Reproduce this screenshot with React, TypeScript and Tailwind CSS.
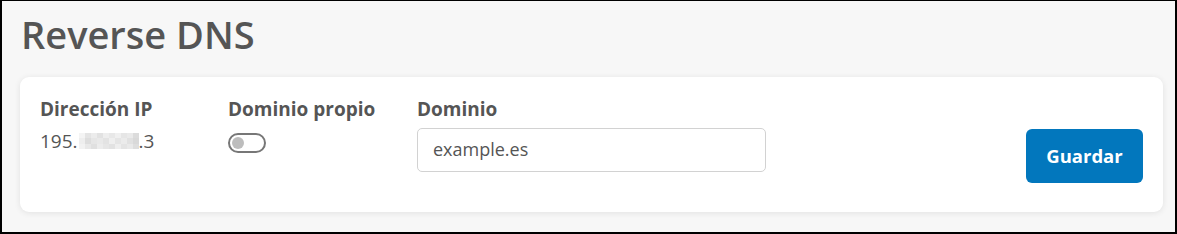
import React from "react";

const blur = [
  ["#f4f4f4", "#e4e4e4", "#ececec", "#e2e2e2", "#eeeeee", "#e8e8e8", "#f0f0f0", "#e6e6e6", "#eaeaea", "#dcdcdc"],
  ["#eeeeee", "#dddddd", "#e6e6e6", "#e9e9e9", "#e3e3e3", "#efefef", "#e5e5e5", "#ebebeb", "#e1e1e1", "#d9d9d9"],
  ["#f2f2f2", "#e8e8e8", "#e0e0e0", "#ececec", "#e6e6e6", "#e2e2e2", "#eeeeee", "#e4e4e4", "#e9e9e9", "#dedede"],
];

export default function App() {
  return (
    <div
      className="w-[1177px] h-[234px] bg-[#f7f7f7] border-black border-x-2 border-b-2 border-t overflow-hidden text-[#555]"
      style={{ fontFamily: '"Open Sans", "Noto Sans", sans-serif' }}
    >
      <div className="pl-[18px] pr-[12px] pt-[12.8px]">
        <h1 className="text-[38px] leading-[41px] font-semibold text-[#555] pl-[1px]">Reverse DNS</h1>
        <div className="mt-[22.2px] h-[135px] rounded-[9px] bg-white shadow-[0_1px_6px_rgba(0,0,0,0.09)] pl-[20px] pr-[20px] pt-[19px] flex items-start">
          <div className="w-[188px] flex flex-col">
            <div className="text-[19px] leading-[26px] font-bold">Dirección IP</div>
            <div className="mt-[6px] text-[19px] leading-[26px] flex items-center">
              <span>195.</span>
              <span className="inline-flex flex-col ml-[1px]">
                {blur.map((row, i) => (
                  <span key={i} className="flex">
                    {row.map((c, j) => (
                      <span key={j} className="w-[6px] h-[5.4px]" style={{ background: c }} />
                    ))}
                  </span>
                ))}
              </span>
              <span>.3</span>
            </div>
          </div>
          <div className="w-[189px] flex flex-col">
            <div className="text-[19px] leading-[26px] font-bold">Dominio propio</div>
            <div className="mt-[11px] w-[38px] h-[20px] rounded-full border-2 border-[#777] flex items-center pl-[2px]">
              <span className="w-[12px] h-[12px] rounded-full bg-[#bdbdbd]" />
            </div>
          </div>
          <div className="flex flex-col">
            <div className="text-[19px] leading-[26px] font-bold">Dominio</div>
            <div className="mt-[6px] w-[349px] h-[44px] rounded-[5px] border border-[#d2d2d2] flex items-center px-[15px] text-[18px]">
              example.es
            </div>
          </div>
          <button className="ml-auto mt-[33px] w-[117px] h-[54px] rounded-[6px] bg-[#0277bd] text-white text-[18.5px] font-bold">
            Guardar
          </button>
        </div>
      </div>
    </div>
  );
}
